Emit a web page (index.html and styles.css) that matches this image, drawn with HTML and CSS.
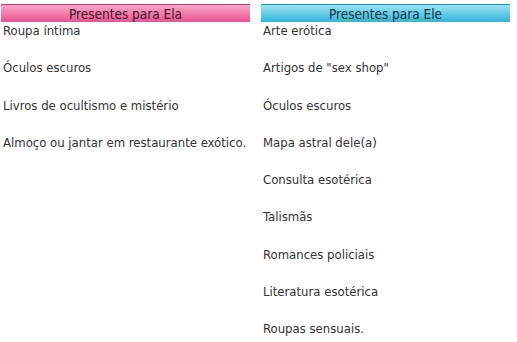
FILE: index.html
```html
<!DOCTYPE html>
<html lang="pt">
<head>
<meta charset="utf-8">
<link rel="stylesheet" href="styles.css">
</head>
<body>
<div class="gifts">
  <section class="col">
    <h2 class="head head-ela">Presentes para Ela</h2>
    <ul class="list">
      <li>Roupa íntima</li>
      <li>Óculos escuros</li>
      <li>Livros de ocultismo e mistério</li>
      <li>Almoço ou jantar em restaurante exótico.</li>
    </ul>
  </section>
  <section class="col">
    <h2 class="head head-ele">Presentes para Ele</h2>
    <ul class="list">
      <li>Arte erótica</li>
      <li>Artigos de "sex shop"</li>
      <li>Óculos escuros</li>
      <li>Mapa astral dele(a)</li>
      <li>Consulta esotérica</li>
      <li>Talismãs</li>
      <li>Romances policiais</li>
      <li>Literatura esotérica</li>
      <li>Roupas sensuais.</li>
    </ul>
  </section>
</div>
</body>
</html>
```
FILE: styles.css
```css
html, body { margin: 0; padding: 0; background: #fff; }
body { font-family: "DejaVu Sans Condensed", "DejaVu Sans", sans-serif; font-stretch: condensed; font-size: 13px; color: #333; }
.gifts { display: grid; grid-template-columns: 249px 249px; column-gap: 11px; padding: 4px 0 0 1px; }
.head { margin: 0; height: 18px; line-height: 18px; font-size: 13.5px; font-weight: normal; text-align: center; box-sizing: border-box; }
.head-ela { background: linear-gradient(#f7a8c8, #f05090); border-top: 1px solid #c04070; color: #40142a; }
.head-ele { background: linear-gradient(#9ee2f2, #2fb6d8); border-top: 1px solid #2a90b0; color: #123844; }
.list { list-style: none; margin: 0; padding: 0; }
.list li { height: 37.25px; line-height: 18px; padding-left: 2px; white-space: nowrap; }
```
